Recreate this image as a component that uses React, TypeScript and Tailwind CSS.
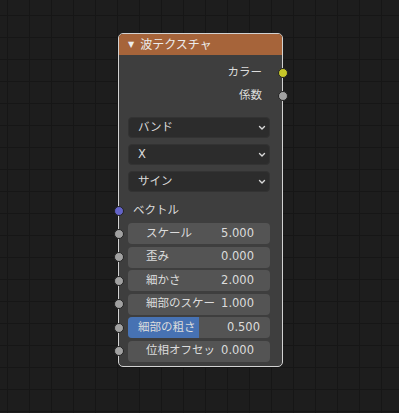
import React from 'react';

const font = { fontFamily: '"DejaVu Sans", "Noto Sans CJK JP", sans-serif' };

const Socket = ({ color, side }: { color: string; side: 'left' | 'right' }) => (
  <span
    className={`absolute top-1/2 -translate-y-1/2 w-[10px] h-[10px] rounded-full border border-[#222222] ${color} ${
      side === 'left' ? 'left-[-5.5px]' : 'right-[-5.5px]'
    }`}
  />
);

const Dropdown = ({ label }: { label: string }) => (
  <div className="h-[21px] flex items-center justify-between pl-[9px] pr-[2px] rounded-[4px] bg-[#2c2c2c] border border-[#333333]">
    <span>{label}</span>
    <svg width="10" height="10" viewBox="0 0 10 10" className="text-[#d8d8d8]">
      <path d="M2.5 3.5 L5 6 L7.5 3.5" fill="none" stroke="currentColor" strokeWidth="1.4" strokeLinecap="round" strokeLinejoin="round" />
    </svg>
  </div>
);

const NumField = ({ label, value }: { label: string; value: string }) => (
  <div className="relative h-[21px]">
    <Socket color="bg-[#a1a1a1]" side="left" />
    <div className="ml-[9px] mr-[12px] h-full flex items-center justify-between pl-[18px] pr-[16px] rounded-[4px] bg-[#545454]">
      <span>{label}</span>
      <span>{value}</span>
    </div>
  </div>
);

const SliderField = ({ label, value, fill }: { label: string; value: string; fill: number }) => (
  <div className="relative h-[21px]">
    <Socket color="bg-[#a1a1a1]" side="left" />
    <div className="relative ml-[9px] mr-[12px] h-full rounded-[4px] bg-[#545454] overflow-hidden">
      <div className="absolute inset-y-0 left-0 bg-[#4772b3]" style={{ width: `${fill * 100}%` }} />
      <div className="relative h-full flex items-center justify-between pl-[10px] pr-[10px]">
        <span>{label}</span>
        <span>{value}</span>
      </div>
    </div>
  </div>
);

export default function App() {
  return (
    <div
      className="w-[399px] h-[413px] overflow-hidden bg-[#1d1d1d] bg-[linear-gradient(to_right,#161616_1px,transparent_1px),linear-gradient(to_bottom,#161616_1px,transparent_1px)] bg-[size:22px_22px] bg-[position:7px_15px] pl-[118px] pt-[33px] text-[11.5px] text-[#dcdcdc]"
      style={font}
    >
      <div className="relative w-[165px] h-[334px] rounded-[5px] border border-[#d2d2d2] bg-[#3e3e3e] flex flex-col">
        <div className="h-[21px] shrink-0 flex items-center gap-[6px] pl-[9px] rounded-t-[4px] bg-[#a6643a] text-[#ececec]">
          <span className="text-[8px] leading-none">▼</span>
          <span className="text-[12px]">波テクスチャ</span>
        </div>

        <div className="pt-[6px]">
          <div className="relative h-[23px] flex items-center justify-end pr-[20px]">
            カラー
            <Socket color="bg-[#c7c729]" side="right" />
          </div>
          <div className="relative h-[23px] flex items-center justify-end pr-[20px]">
            係数
            <Socket color="bg-[#a1a1a1]" side="right" />
          </div>
        </div>

        <div className="mt-[10px] ml-[9px] mr-[12px] flex flex-col gap-[6px]">
          <Dropdown label="バンド" />
          <Dropdown label="X" />
          <Dropdown label="サイン" />
        </div>

        <div className="relative mt-[7px] h-[23px] flex items-center pl-[14px]">
          <Socket color="bg-[#6363c7]" side="left" />
          ベクトル
        </div>

        <div className="mt-[1px] flex flex-col gap-[2.5px]">
          <NumField label="スケール" value="5.000" />
          <NumField label="歪み" value="0.000" />
          <NumField label="細かさ" value="2.000" />
          <NumField label="細部のスケー" value="1.000" />
          <SliderField label="細部の粗さ" value="0.500" fill={0.5} />
          <NumField label="位相オフセッ" value="0.000" />
        </div>
      </div>
    </div>
  );
}
